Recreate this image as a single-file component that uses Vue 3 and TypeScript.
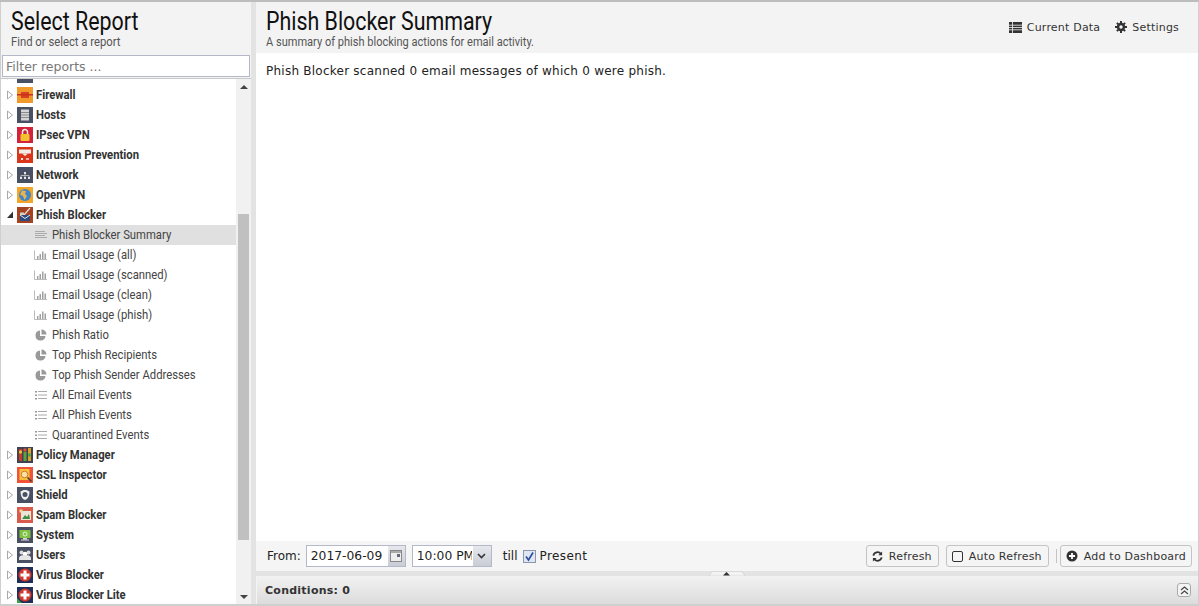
<script setup lang="ts">
type Kind = 'lines' | 'bars' | 'pie' | 'list'
interface Row { label: string; icon?: string; kind?: Kind; open?: boolean; selected?: boolean }

const icons: Record<string, string> = {
  events: '<rect width="16" height="16" fill="#4a5064"/><rect x="4" y="1" width="8" height="8" fill="#ddd"/>',
  firewall: '<rect width="16" height="16" fill="#ef9a2a"/><rect x="4" y="5" width="8" height="6" fill="#d8401f"/><rect x="0" y="7" width="16" height="1.500" fill="#c9301a"/>',
  hosts: '<rect width="16" height="16" fill="#4a5064"/><rect x="4" y="2.500" width="8" height="11" fill="#d5d5d5"/><path d="M4 5.500h8M4 8h8M4 10.500h8" stroke="#8a8a8a" stroke-width="1"/>',
  ipsec: '<rect width="16" height="16" fill="#d4213d"/><rect x="3.500" y="7" width="9" height="7" rx="1" fill="#f2c230"/><path d="M5.500 7V5a2.500 2.500 0 0 1 5 0v2" fill="none" stroke="#f4f0e0" stroke-width="1.500"/>',
  ips: '<rect width="16" height="16" fill="#d9361c"/><rect x="2" y="2.500" width="12" height="4" fill="#f1ece6"/><path d="M5 6.500 8 9l3-2.500z" fill="#f1ece6"/><rect x="4" y="11" width="2" height="2" fill="#f1ece6"/><rect x="9" y="11" width="3" height="2" fill="#f1b0a0"/>',
  network: '<rect width="16" height="16" fill="#4a5064"/><rect x="7" y="5" width="2" height="2" fill="#e8e8e8"/><rect x="3" y="10" width="2" height="2" fill="#e8e8e8"/><rect x="7" y="10" width="2" height="2" fill="#e8e8e8"/><rect x="11" y="10" width="2" height="2" fill="#e8e8e8"/><path d="M4 10V8.500h8V10M8 7v3" fill="none" stroke="#c8c8c8" stroke-width=".8"/>',
  openvpn: '<rect width="16" height="16" fill="#f4a62a"/><circle cx="8" cy="8" r="6" fill="#3f86c9"/><path d="M5 3.500 9 4 8 7 10 9 7.500 13 6 9 3 7.500z" fill="#e9b44a"/>',
  phish: '<rect width="16" height="16" fill="#a5421f"/><path d="M13 1 7 8" stroke="#e8e0d8" stroke-width="1.200"/><rect x="3" y="8" width="10" height="6" fill="#2e4a7e"/><path d="M3 8l5 3.500L13 8" fill="none" stroke="#e8e8e8"/><path d="M3 5.500h4v2.500H3z" fill="#d9d0c4"/>',
  policy: '<rect width="16" height="16" fill="#3f4254"/><rect x="2" y="2" width="3" height="12" fill="#c93a2b"/><rect x="6.500" y="5" width="3" height="9" fill="#5aa53b"/><rect x="11" y="1" width="3" height="13" fill="#d9a32b"/><circle cx="3.500" cy="5" r="1.700" fill="#e9c02c"/><circle cx="8" cy="3" r="1.700" fill="#e0512f"/><circle cx="12.500" cy="8" r="1.700" fill="#5aa53b"/>',
  ssl: '<rect width="16" height="16" fill="#f0533a"/><rect x="2.500" y="2" width="10" height="11" fill="#f4c238"/><circle cx="7.500" cy="7.500" r="3.300" fill="#f6e3a8" stroke="#d9752a"/><path d="m10.500 10.500 4 4" stroke="#4a3b2e" stroke-width="1.600"/>',
  shield: '<rect width="16" height="16" fill="#4a5064"/><path d="M8 3c2 0 3 .6 4.500 1.500C12.500 9 11 12 8 13 5 12 3.500 9 3.500 4.500 5 3.600 6 3 8 3z" fill="#eee"/><circle cx="8" cy="7.500" r="2.500" fill="#4a5064"/>',
  spam: '<rect width="16" height="16" fill="#d95b4e"/><rect x="4" y="4" width="10" height="9" fill="#e9e6d8"/><path d="m5 12 3-4 2 2 2-3 1 5z" fill="#3e8e41"/><rect x="2.500" y="2.500" width="3" height="3" fill="#f2d9a0"/>',
  system: '<rect width="16" height="16" fill="#4a5064"/><rect x="2.500" y="3" width="11" height="8" fill="#7fc241"/><rect x="6" y="11" width="4" height="1.500" fill="#ddd"/><rect x="4" y="12.500" width="8" height="1" fill="#ddd"/><circle cx="8" cy="7" r="2" fill="none" stroke="#e9f5d8"/>',
  users: '<rect width="16" height="16" fill="#4a5064"/><circle cx="4.500" cy="5.500" r="2" fill="#ddd"/><circle cx="11.500" cy="5.500" r="2" fill="#ddd"/><circle cx="8" cy="7" r="2.300" fill="#fff"/><path d="M2 11.500c0-3 3-3.500 6-3.500s6 .5 6 3.500V13H2z" fill="#e6e6e6"/>',
  virus: '<rect width="16" height="16" fill="#1f2f57"/><circle cx="8" cy="8" r="6.500" fill="#d1392e"/><path d="M6.500 3.500h3v3h3v3h-3v3h-3v-3h-3v-3h3z" fill="#fff"/>',
  viruslite: '<rect width="16" height="16" fill="#1f2f57"/><circle cx="8" cy="8" r="6.500" fill="#d1392e"/><path d="M6.500 3.500h3v3h3v3h-3v3h-3v-3h-3v-3h3z" fill="#fff"/><path d="M0 11l5 5H0z" fill="#3f9b4a"/>',
}

const rows: Row[] = [
  { label: 'Events', icon: 'events' },
  { label: 'Firewall', icon: 'firewall' },
  { label: 'Hosts', icon: 'hosts' },
  { label: 'IPsec VPN', icon: 'ipsec' },
  { label: 'Intrusion Prevention', icon: 'ips' },
  { label: 'Network', icon: 'network' },
  { label: 'OpenVPN', icon: 'openvpn' },
  { label: 'Phish Blocker', icon: 'phish', open: true },
  { label: 'Phish Blocker Summary', kind: 'lines', selected: true },
  { label: 'Email Usage (all)', kind: 'bars' },
  { label: 'Email Usage (scanned)', kind: 'bars' },
  { label: 'Email Usage (clean)', kind: 'bars' },
  { label: 'Email Usage (phish)', kind: 'bars' },
  { label: 'Phish Ratio', kind: 'pie' },
  { label: 'Top Phish Recipients', kind: 'pie' },
  { label: 'Top Phish Sender Addresses', kind: 'pie' },
  { label: 'All Email Events', kind: 'list' },
  { label: 'All Phish Events', kind: 'list' },
  { label: 'Quarantined Events', kind: 'list' },
  { label: 'Policy Manager', icon: 'policy' },
  { label: 'SSL Inspector', icon: 'ssl' },
  { label: 'Shield', icon: 'shield' },
  { label: 'Spam Blocker', icon: 'spam' },
  { label: 'System', icon: 'system' },
  { label: 'Users', icon: 'users' },
  { label: 'Virus Blocker', icon: 'virus' },
  { label: 'Virus Blocker Lite', icon: 'viruslite' },
]
</script>

<template>
  <div class="app">
    <aside class="side">
      <header class="side-head">
        <h1 class="cond title">Select Report</h1>
        <p class="cond sub">Find or select a report</p>
      </header>
      <div class="filter-wrap"><input class="filter" placeholder="Filter reports ..." /></div>
      <div class="tree-wrap">
        <ul class="tree">
          <li v-for="r in rows" :key="r.label" class="row" :class="{ selected: r.selected }">
            <template v-if="r.icon">
              <svg class="exp" width="8" height="10" viewBox="0 0 8 10">
                <path v-if="r.open" d="M7 1.500V8H1z" fill="#333" />
                <path v-else d="M1.500 1 6.500 5 1.500 9z" fill="#fff" stroke="#aaa" />
              </svg>
              <svg class="app-icon" width="16" height="16" viewBox="0 0 16 16" v-html="icons[r.icon]" />
              <span class="cond label bold">{{ r.label }}</span>
            </template>
            <template v-else>
              <svg class="kind" width="13" height="14" viewBox="0 0 13 14">
                <path v-if="r.kind === 'lines'" d="M1 3.500h10M1 5.500h12M1 7.500h10M1 9.500h12" stroke="#aaa" stroke-width="1.100" />
                <g v-else-if="r.kind === 'bars'" fill="#a0a0a0">
                  <path d="M.5 2.500v9h12.500" fill="none" stroke="#bbb" />
                  <rect x="3" y="8" width="1.500" height="3" />
                  <rect x="5.500" y="6" width="1.500" height="5" />
                  <rect x="8" y="3.500" width="1.500" height="7.500" />
                  <rect x="10.500" y="5.500" width="1.500" height="5.500" />
                </g>
                <g v-else-if="r.kind === 'pie'" fill="#999">
                  <path d="M6 2.500A5 5 0 1 0 11.500 8H6z" />
                  <path d="M7.500 1.500A5 5 0 0 1 12.500 6.500H7.500z" />
                </g>
                <g v-else>
                  <path d="M4 3.500h9M4 7h9M4 10.500h9" stroke="#aaa" stroke-width="1.200" />
                  <rect x="1" y="3" width="2" height="1.500" fill="#999" />
                  <rect x="1" y="6.500" width="2" height="1.500" fill="#999" />
                  <rect x="1" y="10" width="2" height="1.500" fill="#999" />
                </g>
              </svg>
              <span class="cond label">{{ r.label }}</span>
            </template>
          </li>
        </ul>
        <div class="scrollbar">
          <span class="arrow up" />
          <div class="track"><div class="thumb" /></div>
          <span class="arrow down" />
        </div>
      </div>
    </aside>

    <div class="v-split" />

    <main class="main">
      <header class="main-head">
        <div>
          <h2 class="cond title">Phish Blocker Summary</h2>
          <p class="cond sub wide">A summary of phish blocking actions for email activity.</p>
        </div>
        <nav class="head-actions">
          <span class="head-btn">
            <svg width="13" height="11" viewBox="0 0 13 11" fill="#333"><path d="M0 0h13v11H0z" /><path d="M0 3.200h13M0 5.500h13M0 7.800h13M3.500 0v11" stroke="#f5f5f5" stroke-width=".8" /></svg>
            Current Data
          </span>
          <span class="head-btn">
            <svg width="12" height="12" viewBox="0 0 12 12" fill="#333"><circle cx="6" cy="6" r="4.200" /><path d="M5 0h2v2H5zM5 10h2v2H5zM0 5h2v2H0zM10 5h2v2h-2zM1.200 2.600l1.400-1.400 1.400 1.400-1.400 1.400zM8 9.400l1.400-1.400 1.400 1.400-1.400 1.400zM8 2.600l1.400-1.400 1.400 1.400L9.400 4zM1.200 9.400 2.600 8 4 9.400l-1.400 1.400z" /><circle cx="6" cy="6" r="1.700" fill="#f5f5f5" /></svg>
            Settings
          </span>
        </nav>
      </header>

      <section class="content">Phish Blocker scanned 0 email messages of which 0 were phish.</section>

      <footer class="toolbar">
        <span class="from">From:</span>
        <div class="field date">
          <span class="value">2017-06-09</span>
          <span class="trigger">
            <svg width="13" height="13" viewBox="0 0 13 13"><rect x=".5" y=".5" width="11" height="11" fill="#eee" stroke="#888" /><rect x="1" y="1" width="10" height="2" fill="#aaa" /><rect x="7" y="4" width="3" height="3" fill="#667" /></svg>
          </span>
        </div>
        <div class="field time">
          <span class="value clip">10:00 PM</span>
          <span class="trigger wide">
            <svg width="9" height="6" viewBox="0 0 9 6"><path d="M1 1l3.500 3.500L8 1" fill="none" stroke="#333" stroke-width="1.600" /></svg>
          </span>
        </div>
        <span class="till">till</span>
        <span class="check">
          <svg width="13" height="13" viewBox="0 0 13 13"><rect x=".5" y=".5" width="12" height="12" fill="#dfe6f2" stroke="#8b97ad" /><path d="M3 6.500 5.500 10 10 2.500" fill="none" stroke="#2b4f9e" stroke-width="1.700" /></svg>
        </span>
        <span class="present">Present</span>
        <span class="spacer" />
        <button class="btn">
          <svg width="11" height="11" viewBox="0 0 12 12" fill="none" stroke="#333" stroke-width="2"><path d="M1.500 5a4.600 4.600 0 0 1 8.200-1.800M10.500 7a4.600 4.600 0 0 1-8.200 1.800" /><path d="M11 .5v4H7zM1 11.500v-4h4z" fill="#333" stroke="none" /></svg>
          Refresh
        </button>
        <button class="btn gap-left">
          <svg width="11" height="11" viewBox="0 0 11 11"><rect x=".5" y=".5" width="10" height="10" rx="1.500" fill="none" stroke="#333" /></svg>
          Auto Refresh
        </button>
        <span class="sep" />
        <button class="btn narrow">
          <svg width="12" height="12" viewBox="0 0 12 12"><circle cx="6" cy="6" r="5.500" fill="#333" /><path d="M6 3v6M3 6h6" stroke="#fff" stroke-width="1.800" /></svg>
          Add to Dashboard
        </button>
      </footer>

      <div class="h-split">
        <svg class="collapse-tab" width="36" height="5" viewBox="0 0 36 5">
          <path d="M0 5 3 .5h30L36 5z" fill="#f2f2f2" stroke="#cfcfcf" stroke-width=".6" />
          <path d="M14 4.500 17.500 1 21 4.500z" fill="#333" />
        </svg>
      </div>

      <div class="conditions">
        <strong>Conditions: 0</strong>
        <span class="tool">
          <svg width="9" height="9" viewBox="0 0 9 9" fill="none" stroke="#444" stroke-width="1.200"><path d="M1 4l3.500-3L8 4M1 8l3.500-3L8 8" /></svg>
        </span>
      </div>
    </main>
  </div>
</template>

<style>
html, body { margin: 0; padding: 0; overflow: hidden; }
</style>

<style scoped>
.app {
  display: flex;
  width: 1199px;
  height: 606px;
  box-sizing: border-box;
  border-top: 2px solid #bdbdbd;
  border-right: 1px solid #cfcfcf;
  border-bottom: 2px solid #cfcfcf;
  background: #fff;
  overflow: hidden;
  font-family: "DejaVu Sans", sans-serif;
}
.side {
  width: 251px;
  flex: none;
  display: flex;
  flex-direction: column;
  box-sizing: border-box;
  border-left: 1px solid #cfcfcf;
}
.side-head {
  height: 52px;
  flex: none;
  box-sizing: border-box;
  padding: 6px 0 0 10px;
  background: #f3f3f3;
}
.cond {
  display: block;
  margin: 0;
  font-family: Roboto, sans-serif;
  white-space: nowrap;
  transform-origin: left center;
  transform: scaleX(0.855);
}
.title {
  font-size: 25px;
  line-height: 27px;
  font-weight: 400;
  color: #111;
}
.sub {
  font-size: 12px;
  line-height: 14px;
  color: #555;
  transform: scaleX(0.94);
}
.sub.wide { transform: scaleX(0.92); }
.filter-wrap {
  height: 25px;
  flex: none;
  box-sizing: border-box;
  padding: 1px 0 1px 1px;
  background: #f3f3f3;
  border-bottom: 1px solid #c8c8c8;
}
.filter {
  display: block;
  width: 248px;
  height: 22px;
  box-sizing: border-box;
  padding: 0 3px;
  margin: 0;
  border: 1px solid #b5b8c8;
  outline: none;
  background: #fff;
  font: 12.500px "DejaVu Sans", sans-serif;
  color: #333;
}
.filter::placeholder { color: #777; opacity: 1; }
.tree-wrap {
  flex: 1;
  min-height: 0;
  display: flex;
  overflow: hidden;
}
.tree {
  flex: 1;
  min-width: 0;
  list-style: none;
  margin: -14px 0 0;
  padding: 0;
}
.row {
  height: 20px;
  display: flex;
  align-items: center;
  box-sizing: border-box;
  padding-left: 5px;
}
.row.selected { background: #e0e0e0; }
.exp { flex: none; margin-right: 3px; }
.app-icon { flex: none; margin-right: 3px; display: block; }
.kind { flex: none; margin-left: 28px; margin-right: 5px; display: block; }
.label {
  font-size: 13.500px;
  line-height: 20px;
  margin-top: -2px;
  color: #444;
  transform: scaleX(0.835);
}
.label.bold {
  font-weight: 700;
  color: #333;
}
.scrollbar {
  width: 15px;
  flex: none;
  display: flex;
  flex-direction: column;
  background: #f1f1f1;
}
.arrow {
  height: 15px;
  flex: none;
  display: flex;
  align-items: center;
  justify-content: center;
}
.arrow::before {
  content: "";
  border-left: 4px solid transparent;
  border-right: 4px solid transparent;
}
.arrow.up::before { border-bottom: 4px solid #444; }
.arrow.down::before { border-top: 4px solid #444; }
.track {
  flex: 1;
  min-height: 0;
  display: flex;
  padding: 120px 2px 49px;
}
.thumb { flex: 1; background: #c0c0c0; }
.v-split {
  width: 5px;
  flex: none;
  background: #e3e3e3;
}
.main {
  flex: 1;
  min-width: 0;
  display: flex;
  flex-direction: column;
}
.main-head {
  height: 51px;
  flex: none;
  box-sizing: border-box;
  display: flex;
  justify-content: space-between;
  padding: 6px 19px 0 10px;
  background: #f3f3f3;
}
.head-actions {
  display: flex;
  gap: 15px;
  height: 38px;
  align-items: center;
}
.head-btn {
  display: inline-flex;
  align-items: center;
  gap: 5px;
  font-size: 11px;
  letter-spacing: .2px;
  color: #333;
}
.content {
  flex: 1;
  padding: 11px 10px 0;
  font-size: 12px;
  line-height: 15px;
  color: #222;
  letter-spacing: .24px;
}
.toolbar {
  height: 30px;
  flex: none;
  display: flex;
  align-items: center;
  box-sizing: border-box;
  padding: 0 6px 0 11px;
  background: #f5f5f5;
  font-size: 12px;
  color: #222;
}
.from { margin-right: 6px; }
.field {
  height: 22px;
  display: flex;
  box-sizing: border-box;
  border: 1px solid #b5b8c8;
  background: #fff;
  overflow: hidden;
}
.date { width: 100px; margin-left: -1px; }
.time { width: 80px; margin-left: 6px; }
.value {
  flex: 1;
  min-width: 0;
  padding-left: 4px;
  margin-right: 1px;
  line-height: 21px;
  font-size: 12.300px;
  white-space: nowrap;
  overflow: hidden;
}
.trigger {
  width: 17px;
  flex: none;
  display: flex;
  align-items: center;
  justify-content: center;
  background: linear-gradient(#e6e8ee, #c8ccd4);
}
.trigger.wide { width: 18px; }
.till { margin-left: 11px; }
.check { margin: 0 4px 0 5px; display: flex; }
.present { letter-spacing: .4px; }
.spacer { flex: 1; }
.btn {
  height: 22px;
  display: inline-flex;
  align-items: center;
  gap: 6px;
  box-sizing: border-box;
  margin: 0;
  padding: 0 6px 0 5px;
  border: 1px solid #c4c4c4;
  border-radius: 3px;
  background: #f5f5f5;
  font: 11px "DejaVu Sans", sans-serif;
  letter-spacing: .2px;
  color: #333;
}
.btn.narrow { padding-right: 5px; }
.gap-left { margin-left: 7px; }
.sep {
  width: 1px;
  height: 14px;
  margin: 0 3px 0 7px;
  background: #c4c4c4;
}
.h-split {
  height: 5px;
  flex: none;
  display: flex;
  justify-content: center;
  background: #e3e3e3;
}
.collapse-tab { display: block; }
.conditions {
  height: 28px;
  flex: none;
  display: flex;
  align-items: center;
  justify-content: space-between;
  box-sizing: border-box;
  padding: 0 7px 0 8px;
  background: linear-gradient(#f2f2f2, #dcdcdc);
  border-left: 1px solid #f4f4f4;
  font-size: 11px;
  letter-spacing: .25px;
  color: #333;
}
.tool {
  width: 14px;
  height: 14px;
  display: flex;
  align-items: center;
  justify-content: center;
  box-sizing: border-box;
  border: 1px solid #aaa;
  border-radius: 3px;
  background: #f4f4f4;
}
</style>
